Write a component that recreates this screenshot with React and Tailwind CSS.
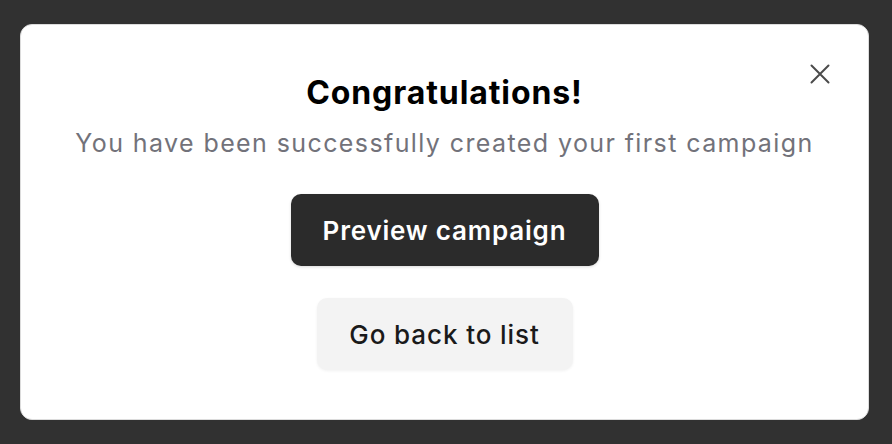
import React from 'react';

const App = () => {
  return (
    <div
      className="w-[892px] h-[444px] bg-[#313131] pt-[24px] pl-[20px]"
      style={{ fontFamily: 'Inter, "Noto Sans", sans-serif' }}
    >
      <div className="relative w-[849px] h-[396px] bg-white rounded-[12px] border border-[#dcdcdc] flex flex-col items-center pt-[48px]">
        <button className="absolute top-[39px] right-[38px] text-[#4b4b4b]">
          <svg width="20" height="20" viewBox="0 0 20 20" fill="none" stroke="currentColor" strokeWidth="2" strokeLinecap="round">
            <path d="M1.5 1.5L18.5 18.5M18.5 1.5L1.5 18.5" />
          </svg>
        </button>
        <h2 className="text-[32px] leading-[40px] font-bold text-black tracking-[0.9px]">Congratulations!</h2>
        <p className="mt-[15px] text-[25px] leading-[30px] text-[#72727a] tracking-[1.4px]">
          You have been successfully created your first campaign
        </p>
        <button className="mt-[36px] w-[308px] h-[72px] rounded-[10px] bg-[#2b2b2b] text-white text-[26px] font-semibold tracking-[0.8px] shadow-[0_1px_3px_rgba(0,0,0,0.15)]">
          Preview campaign
        </button>
        <button className="mt-[32px] w-[256px] h-[72px] rounded-[10px] bg-[#f3f3f3] text-[#1a1a1a] text-[26px] font-medium tracking-[0.9px] shadow-[0_1px_3px_rgba(0,0,0,0.06)]">
          Go back to list
        </button>
      </div>
    </div>
  );
};

export default App;
